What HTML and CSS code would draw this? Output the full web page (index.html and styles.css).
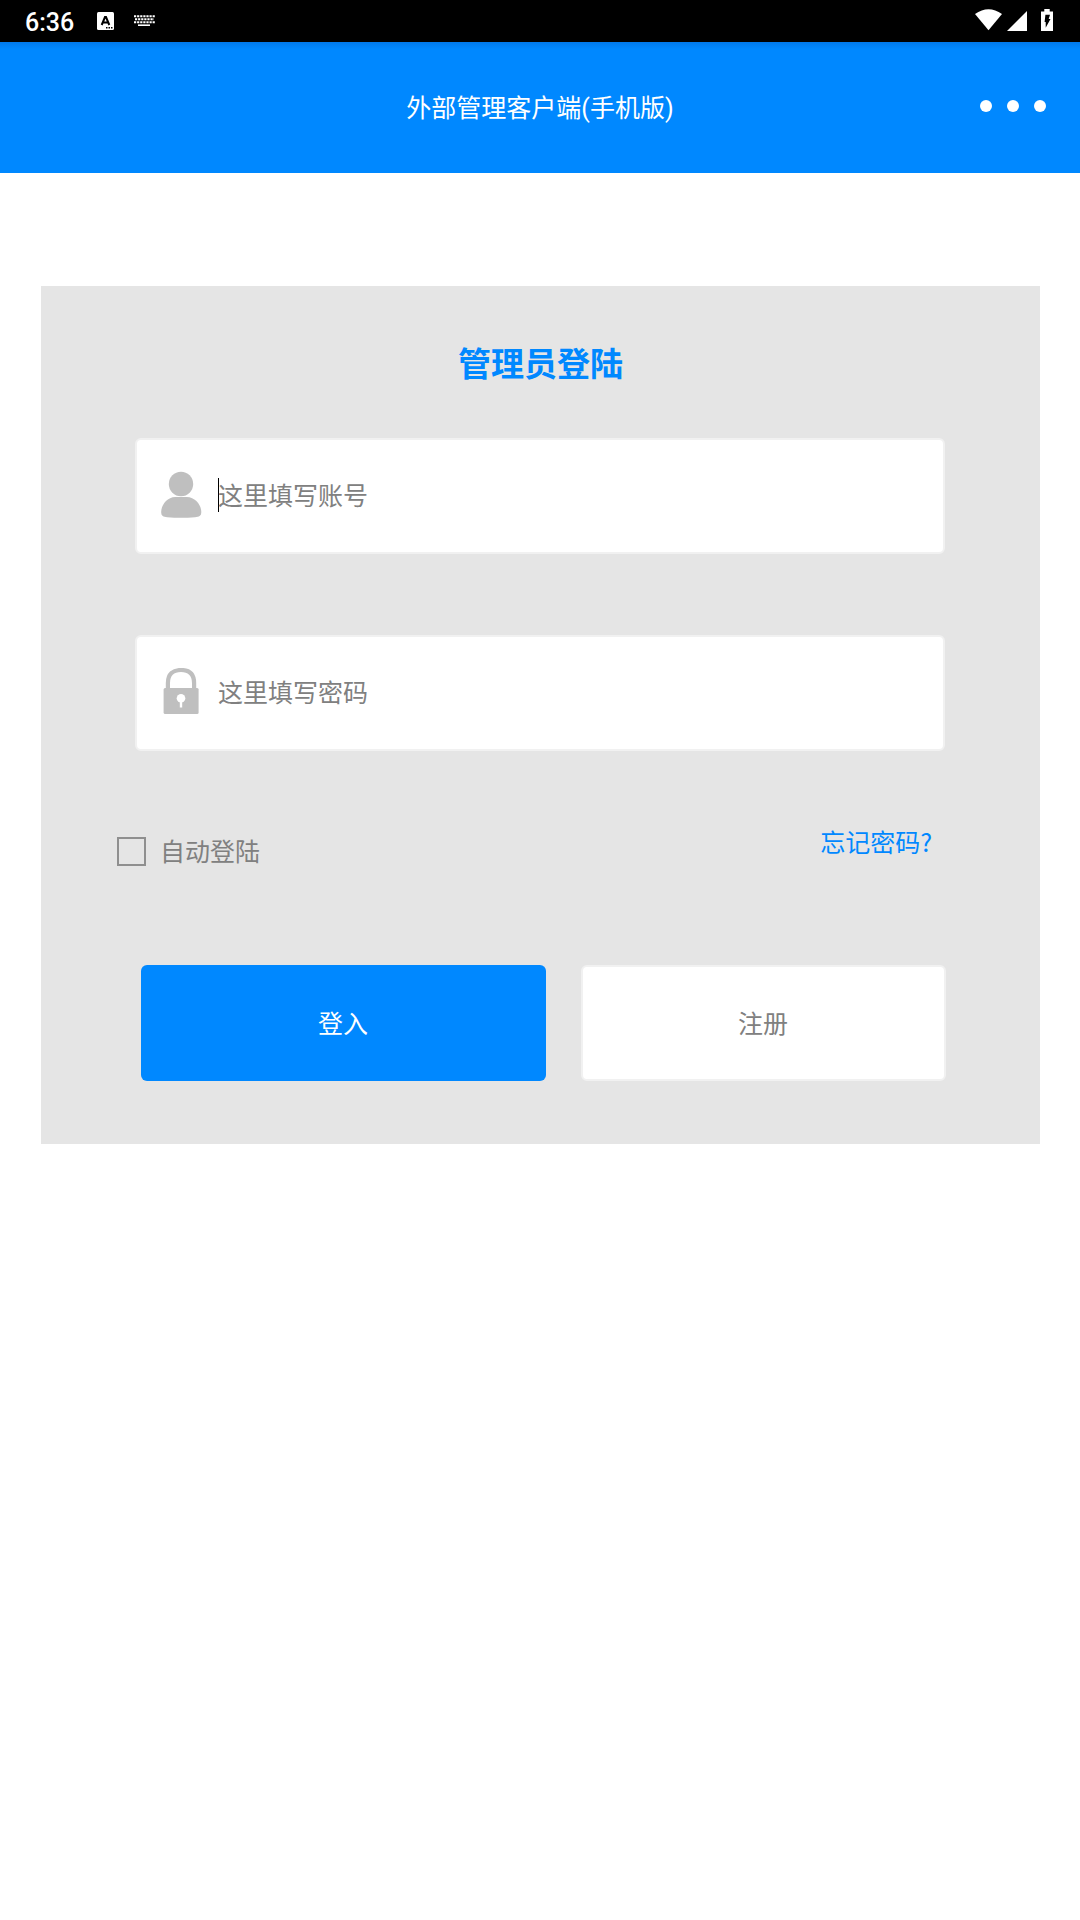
FILE: index.html
```html
<!DOCTYPE html>
<html lang="zh-CN">
<head>
    <meta charset="UTF-8">
    <meta name="viewport" content="width=device-width, initial-scale=1.0">
    <title>外部管理客户端(手机版)</title>
    <link rel="stylesheet" href="styles.css">
</head>
<body>
    <div class="status-bar">
        <span class="time">6:36</span>
        <svg class="ime" width="17" height="18" viewBox="0 0 17 18">
            <rect width="17" height="18" rx="1.5" fill="#fff"/>
            <path d="M4.7 13 L8 5 H9 L12.3 13 M6 10.5 H11" fill="none" stroke="#000" stroke-width="2"/>
            <path d="M9 15h1.5v1.5H9zM11.5 15H13v1.5h-1.5zM14 15h1.5v1.5H14z"/>
        </svg>
        <svg class="keyboard" width="21" height="12" viewBox="0 0 21 12">
            <path d="M0 1.2H21M1 4.2H20M0 7.2H21" stroke="#fff" stroke-width="2" stroke-dasharray="2.2 .9"/>
            <path d="M4 10.2H16" stroke="#fff" stroke-width="1.6"/>
        </svg>
        <svg class="wifi" width="28" height="22" viewBox="0 0 28 22">
            <path d="M0 5 Q13.5 -4.5 27 5 L13.5 21.2Z" fill="#fff"/>
        </svg>
        <svg class="signal" width="21" height="20" viewBox="0 0 21 20">
            <path d="M0 20 L20 0 V20Z" fill="#fff"/>
        </svg>
        <svg class="battery" width="12" height="22" viewBox="0 0 12 23" preserveAspectRatio="none">
            <path d="M3.3 0h5.4v2.5H12V23H0V2.5H3.3Z" fill="#fff"/>
            <path d="M4.4 6H9L7.7 10.5H9.5L4.7 19.5V13.5H3.6Z"/>
        </svg>
    </div>

    <div class="header">
        <h1>外部管理客户端(手机版)</h1>
        <div class="menu">
            <i></i><i></i><i></i>
        </div>
    </div>

    <div class="login-box">
        <h2>管理员登陆</h2>

        <div class="field">
            <svg width="42" height="48" viewBox="0 0 42 48">
                <circle cx="21" cy="13" r="12.2" fill="#bfbfbf"/>
                <path d="M15.2 26H27C35 26 41.3 34 41.3 41C41.3 45 39 45.8 35 46.2Q21 47.2 7.2 46.2C3.2 45.8 1.2 45 1.2 41C1.2 34 7.2 26 15.2 26Z" fill="#bfbfbf"/>
            </svg>
            <span class="caret"></span>
            <input type="text" placeholder="这里填写账号">
        </div>

        <div class="field">
            <svg width="42" height="48" viewBox="0 0 42 48">
                <path d="M7.9 21V15C7.9 6 13 2 21 2S34.1 6 34.1 15V21" fill="none" stroke="#bfbfbf" stroke-width="4.2"/>
                <rect x="3.6" y="20" width="35" height="26" rx="1.5" fill="#bfbfbf"/>
                <circle cx="21" cy="30.3" r="4.3" fill="#fff"/>
                <path d="M21 32V39.5" stroke="#fff" stroke-width="2.4"/>
            </svg>
            <span class="caret hidden"></span>
            <input type="password" placeholder="这里填写密码">
        </div>

        <div class="options">
            <label><span class="checkbox"></span><span class="label-text">自动登陆</span></label>
            <a class="forgot">忘记密码?</a>
        </div>

        <div class="buttons">
            <button class="login">登入</button>
            <button class="register">注册</button>
        </div>
    </div>
</body>
</html>
```

FILE: styles.css
```css
* {
    box-sizing: border-box;
}
body {
    margin: 0;
    background-color: #fff;
    font-family: Roboto, "Noto Sans CJK SC", sans-serif;
    font-size: 25px;
}
.status-bar {
    display: flex;
    align-items: flex-start;
    height: 42px;
    padding: 9px 27px 0 25px;
    background-color: #000;
    color: #fff;
}
.time {
    width: 72px;
    padding-top: 1px;
    line-height: 26px;
    font-size: 25px;
    font-weight: 500;
}
.ime {
    margin-top: 3px;
}
.keyboard {
    margin: 6px auto 0 20px;
}
.signal {
    margin: 2px 13px 0 4px;
}
.header {
    display: grid;
    grid-template-columns: 1fr auto 1fr;
    height: 131px;
    padding: 47px 34px 0;
    background: linear-gradient(#0079ec, #0088ff 7px);
    color: #fff;
}
.header h1 {
    grid-column: 2;
    margin: 0;
    line-height: 40px;
    font-size: 25px;
    font-weight: 400;
}
.menu {
    display: flex;
    justify-content: flex-end;
    gap: 15px;
    padding-top: 11px;
}
.menu i {
    width: 12px;
    height: 12px;
    border-radius: 50%;
    background-color: #fff;
}
.login-box {
    width: 999px;
    height: 858px;
    margin: 113px 0 0 41px;
    padding: 54px 94px 0;
    background-color: #e5e5e5;
}
.login-box h2 {
    height: 50px;
    margin: 0 0 48px;
    line-height: 50px;
    font-size: 33px;
    font-weight: 700;
    text-align: center;
    color: #0088ff;
}
.field {
    display: flex;
    align-items: center;
    width: 810px;
    height: 116px;
    margin-bottom: 81px;
    padding-left: 23px;
    background-color: #fff;
    border: 2px solid #f1f1f1;
    border-radius: 6px;
}
.field svg {
    margin-bottom: 2px;
}
.caret {
    width: 1px;
    height: 34px;
    margin: 0 -1px 2px 16px;
    background-color: #000;
}
.caret.hidden {
    visibility: hidden;
}
.field input {
    flex: 1;
    padding: 0;
    border: none;
    outline: none;
    background: none;
    font: inherit;
}
.field input::placeholder {
    color: #808080;
}
.options {
    display: flex;
    justify-content: space-between;
    align-items: flex-start;
    height: 133px;
    margin: 0 14px 0 -18px;
}
.options label {
    display: flex;
    align-items: flex-start;
    color: #808080;
}
.checkbox {
    width: 29px;
    height: 29px;
    margin: 5px 14px 0 0;
    border: 2px solid #8f8f8f;
}
.label-text {
    padding-top: 1px;
    line-height: 40px;
}
.forgot {
    margin-top: -11px;
    line-height: 40px;
    font-family: "Noto Sans CJK SC", sans-serif;
    color: #0088ff;
}
.buttons {
    display: flex;
    gap: 35px;
    margin-left: 6px;
}
.buttons button {
    height: 116px;
    padding: 0 1px 2px 0;
    border: none;
    border-radius: 6px;
    font: inherit;
}
.buttons .login {
    width: 405px;
    background-color: #0088ff;
    color: #fff;
}
.buttons .register {
    width: 365px;
    background-color: #fff;
    border: 2px solid #f1f1f1;
    color: #808080;
}
```
